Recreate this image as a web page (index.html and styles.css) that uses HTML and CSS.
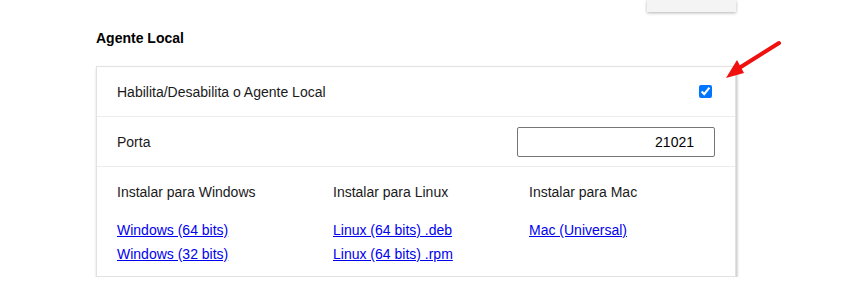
FILE: index.html
```html
<!DOCTYPE html>
<html lang="pt">
	<head>
		<meta charset="utf-8">
		<title>Agente Local</title>
		<link rel="stylesheet" href="styles.css">
	</head>
	<body>
		<div class="page">
			<div class="topStub"></div>
			<h3 class="title">Agente Local</h3>
			<div class="card">
				<div class="row">
					<span>Habilita/Desabilita o Agente Local</span>
					<input type="checkbox" class="check" checked>
				</div>
				<div class="row">
					<span>Porta</span>
					<input type="text" class="port" value="21021">
				</div>
				<div class="downloads">
					<div class="col">
						<p class="colTitle">Instalar para Windows</p>
						<a href="#">Windows (64 bits)</a>
						<a href="#">Windows (32 bits)</a>
					</div>
					<div class="col">
						<p class="colTitle">Instalar para Linux</p>
						<a href="#">Linux (64 bits) .deb</a>
						<a href="#">Linux (64 bits) .rpm</a>
					</div>
					<div class="col">
						<p class="colTitle">Instalar para Mac</p>
						<a href="#">Mac (Universal)</a>
					</div>
				</div>
			</div>
			<!-- seta vermelha -->
			<svg class="arrow" width="70" height="50" viewBox="0 0 70 50">
				<line x1="63" y1="3" x2="20" y2="30" stroke="#f01010" stroke-width="4" stroke-linecap="round"/>
				<polygon points="10,38 21,20 28,33" fill="#f01010"/>
			</svg>
		</div>
	</body>
</html>
```

FILE: styles.css
```css
*{
	margin: 0;
	padding: 0;
	box-sizing: border-box;
}
body{
	background: #fff;
	font-family: "Liberation Sans", Arial, sans-serif;
	font-size: 14px;
	color: #1a1a1a;
}
.page{
	position: relative;
	width: 736px;
	padding-left: 96px;
}
.topStub{
	margin-left: 551px;
	width: 89px;
	height: 12px;
	background: #f4f4f4;
	box-shadow: 0 1px 3px rgba(0,0,0,.3);
}
.title{
	margin: 18px 0 20px;
	font-size: 14px;
	line-height: 16px;
	font-weight: bold;
	color: #000;
}
.card{
	border: 1px solid #e2e2e2;
	box-shadow: 1px 2px 3px rgba(0,0,0,.28);
	background: #fff;
}
.row{
	display: flex;
	align-items: center;
	justify-content: space-between;
	height: 50px;
	padding: 0 20px;
	border-bottom: 1px solid #ececec;
}
.check{
	width: 13px;
	height: 13px;
	margin: 3px 3px 3px 4px;
}
.port{
	width: 198px;
	height: 30px;
	border: 1px solid #767676;
	border-radius: 2px;
	padding: 0 20px;
	text-align: right;
	font-family: inherit;
	font-size: 14px;
	color: #000;
}
.downloads{
	display: grid;
	grid-template-columns: 216px 196px 1fr;
	padding: 17px 20px 10px;
}
.col{
	display: flex;
	flex-direction: column;
	align-items: flex-start;
}
.colTitle{
	line-height: 16px;
	margin-bottom: 18px;
}
.col a{
	line-height: 24px;
	color: #0000ee;
}
.arrow{
	position: absolute;
	left: 716px;
	top: 40px;
}
```
